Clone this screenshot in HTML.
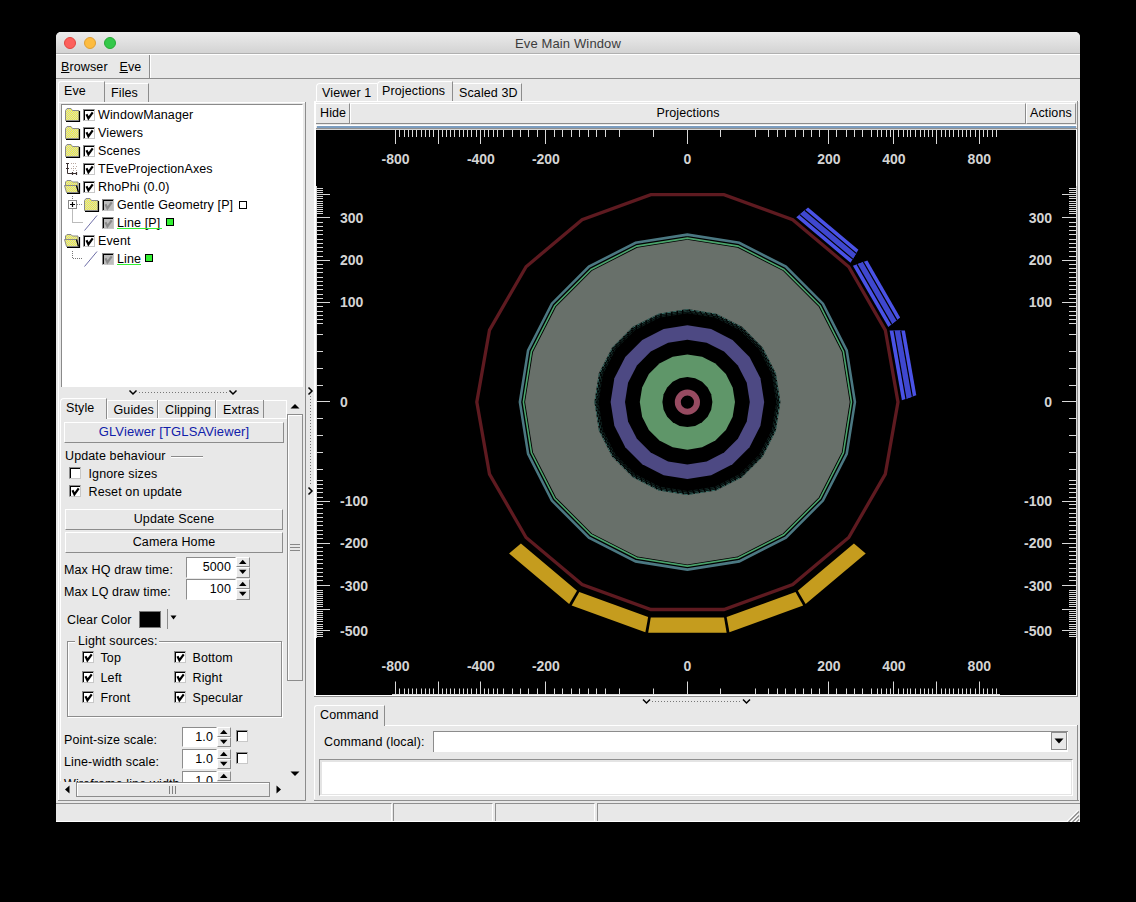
<!DOCTYPE html>
<html><head><meta charset="utf-8">
<style>
html,body{margin:0;padding:0;background:#000;width:1136px;height:902px;overflow:hidden;position:relative;font-family:"Liberation Sans",sans-serif;}
.a{position:absolute;box-sizing:border-box;}
.t{position:absolute;white-space:nowrap;font-size:12.5px;line-height:14px;color:#000;letter-spacing:0.12px;}
.win{position:absolute;left:56px;top:32px;width:1024px;height:790px;background:#e8e8e8;border-radius:5px 5px 0 0;overflow:hidden;}
.raised{border-top:1px solid #fff;border-left:1px solid #fff;border-right:1px solid #8c8c8c;border-bottom:1px solid #8c8c8c;}
.sunken{border-top:1px solid #8c8c8c;border-left:1px solid #8c8c8c;border-right:1px solid #fff;border-bottom:1px solid #fff;}
.cb{position:absolute;width:12px;height:12px;box-sizing:border-box;background:#fff;border-top:1px solid #8a8a8a;border-left:1px solid #8a8a8a;border-right:1px solid #c8c8c8;border-bottom:1px solid #c8c8c8;box-shadow:inset 1px 1px 0 #000;}
.cbg{background:#bdbdbd !important;}
.cb svg{position:absolute;left:0;top:0;}
.cbg{background:#8c8c8c;}
.dot{border-top:1px dotted #888;}
</style></head><body>
<div class="win">
  <!-- title bar -->
  <div class="a" style="left:0;top:0;width:1024px;height:22px;background:linear-gradient(#ececec,#d3d3d3);border-bottom:1px solid #b0b0b0;"></div>
  <div class="a" style="left:8px;top:5px;width:12px;height:12px;border-radius:50%;background:#fc605c;border:0.5px solid #e1463f;"></div>
  <div class="a" style="left:28px;top:5px;width:12px;height:12px;border-radius:50%;background:#fdbc40;border:0.5px solid #de9f34;"></div>
  <div class="a" style="left:48px;top:5px;width:12px;height:12px;border-radius:50%;background:#34c84a;border:0.5px solid #27aa35;"></div>
  <div class="t" style="left:0;width:1024px;text-align:center;top:5px;font-size:13px;letter-spacing:0.13px;color:#3c3c3c;">Eve Main Window</div>
</div>
<!-- All content in page coordinates -->
<!-- menu bar -->
<div class="a" style="left:56px;top:54px;width:1024px;height:1px;background:#fff;"></div>
<div class="a" style="left:56px;top:78px;width:1024px;height:1px;background:#8c8c8c;"></div>
<div class="a" style="left:149px;top:55px;width:1px;height:23px;background:#8c8c8c;"></div>
<div class="a" style="left:150px;top:55px;width:1px;height:23px;background:#fff;"></div>
<div class="t" style="left:61px;top:60px;font-size:12.5px;"><u>B</u>rowser</div>
<div class="t" style="left:119.5px;top:60px;font-size:12.5px;"><u>E</u>ve</div>

<!-- LEFT PANEL -->
<!-- tabs Eve / Files -->
<div class="a" style="left:58px;top:81px;width:47px;height:22px;border-top:1px solid #fff;border-left:1px solid #fff;border-right:1px solid #8c8c8c;border-radius:3px 0 0 0;"></div>
<div class="t" style="left:64px;top:84px;">Eve</div>
<div class="a" style="left:105px;top:83px;width:44px;height:19px;border-top:1px solid #fff;border-right:1px solid #8c8c8c;"></div>
<div class="t" style="left:111px;top:86px;">Files</div>
<div class="a" style="left:58px;top:102px;width:248px;height:1px;background:#fff;"></div>
<div class="a" style="left:58px;top:102px;width:1px;height:698px;background:#fff;"></div>
<div class="a" style="left:305px;top:102px;width:1px;height:698px;background:#8c8c8c;"></div>
<!-- list box -->
<div class="a" style="left:61px;top:104px;width:242px;height:283px;background:#fff;border-top:1px solid #8a8a8a;border-left:1px solid #8a8a8a;border-right:1px solid #fff;"></div>
<svg class="a" style="left:65px;top:108px" width="16" height="14"><path d="M0.5 12.5V2.5L2 0.5H6L7.5 2.5H14V12.5Z" fill="url(#dith)" stroke="#8a8a8a" stroke-width="1"/><path d="M1 13.5H14.5V3" stroke="#000" stroke-width="1.2" fill="none"/></svg>
<div class="cb" style="left:83px;top:109px;"><svg width="12" height="12"><path d="M2.5 4.3L4.4 8.3L8.7 2.3" stroke="#000" stroke-width="2.2" fill="none"/></svg></div>
<div class="t" style="left:98px;top:107.5px;">WindowManager</div>
<svg class="a" style="left:65px;top:126px" width="16" height="14"><path d="M0.5 12.5V2.5L2 0.5H6L7.5 2.5H14V12.5Z" fill="url(#dith)" stroke="#8a8a8a" stroke-width="1"/><path d="M1 13.5H14.5V3" stroke="#000" stroke-width="1.2" fill="none"/></svg>
<div class="cb" style="left:83px;top:127px;"><svg width="12" height="12"><path d="M2.5 4.3L4.4 8.3L8.7 2.3" stroke="#000" stroke-width="2.2" fill="none"/></svg></div>
<div class="t" style="left:98px;top:125.5px;">Viewers</div>
<svg class="a" style="left:65px;top:144px" width="16" height="14"><path d="M0.5 12.5V2.5L2 0.5H6L7.5 2.5H14V12.5Z" fill="url(#dith)" stroke="#8a8a8a" stroke-width="1"/><path d="M1 13.5H14.5V3" stroke="#000" stroke-width="1.2" fill="none"/></svg>
<div class="cb" style="left:83px;top:145px;"><svg width="12" height="12"><path d="M2.5 4.3L4.4 8.3L8.7 2.3" stroke="#000" stroke-width="2.2" fill="none"/></svg></div>
<div class="t" style="left:98px;top:143.5px;">Scenes</div>
<svg class="a" style="left:65px;top:162px" width="13" height="13"><path d="M2.5 1v10.5h9.5" stroke="#3a3030" stroke-width="1" fill="none"/><path d="M1 1.5h3M1 6.5h3M7.5 10v3M11.5 10v3" stroke="#3a3030" stroke-width="1.2"/><path d="M6 1.5h1M8 1.5h1M10 1.5h1M8 4.5h1M11 4.5h1M6 6.5h1M8 6.5h1M10 6.5h1M8 8.5h1M11 8.5h1" stroke="#b8a8a0" stroke-width="1"/></svg>
<div class="cb" style="left:83px;top:163px;"><svg width="12" height="12"><path d="M2.5 4.3L4.4 8.3L8.7 2.3" stroke="#000" stroke-width="2.2" fill="none"/></svg></div>
<div class="t" style="left:98px;top:161.5px;">TEveProjectionAxes</div>
<svg class="a" style="left:64px;top:180px" width="17" height="14"><path d="M1.5 5V2L3 0.5H7L8.5 2H14V12.5H3Z" fill="url(#dith)" stroke="#8a8a8a" stroke-width="1"/><path d="M0.5 5.5H12.5L14.5 12.5H2.5Z" fill="url(#dith)" stroke="#8a8a8a" stroke-width="1"/><path d="M12.5 5.5L14.5 12.5" stroke="#000" stroke-width="1.2"/><path d="M3 13.5H15.5V3" stroke="#000" stroke-width="1.2" fill="none"/></svg>
<div class="cb" style="left:83px;top:181px;"><svg width="12" height="12"><path d="M2.5 4.3L4.4 8.3L8.7 2.3" stroke="#000" stroke-width="2.2" fill="none"/></svg></div>
<div class="t" style="left:98px;top:179.5px;">RhoPhi (0.0)</div>
<svg class="a" style="left:66px;top:196px" width="20" height="36"><path d="M6.5 0V3.5M6.5 12.5V26.5H17" stroke="#777" stroke-width="1" stroke-dasharray="1 1" fill="none"/><rect x="2.5" y="4.5" width="8" height="8" fill="#fff" stroke="#888"/><path d="M4 8.5h5M6.5 6v5" stroke="#000" stroke-width="1.2"/><path d="M11 8.5h6" stroke="#888" stroke-dasharray="1 1"/></svg>
<svg class="a" style="left:84px;top:198px" width="16" height="14"><path d="M0.5 12.5V2.5L2 0.5H6L7.5 2.5H14V12.5Z" fill="url(#dith)" stroke="#8a8a8a" stroke-width="1"/><path d="M1 13.5H14.5V3" stroke="#000" stroke-width="1.2" fill="none"/></svg>
<div class="cb cbg" style="left:102px;top:199px;"><svg width="12" height="12"><path d="M2.5 4.3L4.4 8.3L8.7 2.3" stroke="#8a8a8a" stroke-width="2.2" fill="none"/></svg></div>
<div class="t" style="left:117px;top:197.5px;">Gentle Geometry [P]</div>
<div class="a" style="left:239px;top:201px;width:8px;height:8px;border:1px solid #000;background:#fff;"></div>
<svg class="a" style="left:84px;top:215px" width="14" height="16"><path d="M0.5 15.5L13 0.5" stroke="#5c5c9c" stroke-width="0.9"/></svg>
<div class="cb cbg" style="left:102px;top:217px;"><svg width="12" height="12"><path d="M2.5 4.3L4.4 8.3L8.7 2.3" stroke="#8a8a8a" stroke-width="2.2" fill="none"/></svg></div>
<div class="t" style="left:117px;top:215.5px;">Line [P]</div>
<div class="a" style="left:117px;top:228px;width:45px;height:1px;background:#33f033;"></div>
<div class="a" style="left:166px;top:218px;width:8px;height:8px;border:1px solid #000;background:#33f033;"></div>
<svg class="a" style="left:64px;top:234px" width="17" height="14"><path d="M1.5 5V2L3 0.5H7L8.5 2H14V12.5H3Z" fill="url(#dith)" stroke="#8a8a8a" stroke-width="1"/><path d="M0.5 5.5H12.5L14.5 12.5H2.5Z" fill="url(#dith)" stroke="#8a8a8a" stroke-width="1"/><path d="M12.5 5.5L14.5 12.5" stroke="#000" stroke-width="1.2"/><path d="M3 13.5H15.5V3" stroke="#000" stroke-width="1.2" fill="none"/></svg>
<div class="cb" style="left:83px;top:235px;"><svg width="12" height="12"><path d="M2.5 4.3L4.4 8.3L8.7 2.3" stroke="#000" stroke-width="2.2" fill="none"/></svg></div>
<div class="t" style="left:98px;top:233.5px;">Event</div>
<svg class="a" style="left:66px;top:249px" width="20" height="12"><path d="M6.5 2V9.5H17" stroke="#777" stroke-width="1" stroke-dasharray="1 1" fill="none"/></svg>
<svg class="a" style="left:84px;top:251px" width="14" height="16"><path d="M0.5 15.5L13 0.5" stroke="#5c5c9c" stroke-width="0.9"/></svg>
<div class="cb cbg" style="left:102px;top:253px;"><svg width="12" height="12"><path d="M2.5 4.3L4.4 8.3L8.7 2.3" stroke="#8a8a8a" stroke-width="2.2" fill="none"/></svg></div>
<div class="t" style="left:117px;top:251.5px;">Line</div>
<div class="a" style="left:117px;top:264px;width:24px;height:1px;background:#33f033;"></div>
<div class="a" style="left:145px;top:254px;width:8px;height:8px;border:1px solid #000;background:#33f033;"></div>

<!-- splitter h (left) -->
<svg class="a" style="left:56px;top:385px" width="250" height="14">
 <path d="M73.5 5.5l3.5 3.5 3.5-3.5M173.5 5.5l3.5 3.5 3.5-3.5" stroke="#000" stroke-width="1.5" fill="none"/>
 <path d="M83 7.5H172" stroke="#777" stroke-width="1" stroke-dasharray="1 2" fill="none"/>
</svg>

<!-- Style tabs -->
<div class="a" style="left:60px;top:398px;width:47px;height:21px;border-top:1px solid #fff;border-left:1px solid #fff;border-right:1px solid #8c8c8c;border-radius:4px 0 0 0;"></div>
<div class="t" style="left:66px;top:401px;">Style</div>
<div class="a" style="left:107px;top:400px;width:180px;height:1px;background:#fff;"></div>
<div class="a" style="left:107px;top:400px;width:51px;height:19px;border-right:1px solid #8c8c8c;border-left:1px solid #fff;"></div>
<div class="t" style="left:113.5px;top:403px;">Guides</div>
<div class="a" style="left:158px;top:400px;width:58px;height:19px;border-right:1px solid #8c8c8c;border-left:1px solid #fff;"></div>
<div class="t" style="left:165px;top:403px;">Clipping</div>
<div class="a" style="left:216px;top:400px;width:48px;height:19px;border-right:1px solid #8c8c8c;border-left:1px solid #fff;"></div>
<div class="t" style="left:223px;top:403px;">Extras</div>
<div class="a" style="left:107px;top:418px;width:180px;height:1px;background:#fff;"></div>
<div class="a" style="left:286px;top:400px;width:1px;height:19px;background:#fff;"></div>
<div class="a" style="left:60px;top:419px;width:1px;height:362px;background:#fff;"></div>

<!-- GLViewer button -->
<div class="a raised" style="left:64px;top:422px;width:220px;height:21px;"></div>
<div class="t" style="left:64px;width:220px;text-align:center;top:425px;font-size:13px;color:#1020aa;">GLViewer [TGLSAViewer]</div>

<div class="t" style="left:65px;top:449px;">Update behaviour</div>
<div class="a" style="left:171px;top:456px;width:32px;height:1px;background:#8a8a8a;"></div>
<div class="a" style="left:171px;top:457px;width:32px;height:1px;background:#fff;"></div>
<div class="cb" style="left:69px;top:467px;"></div>
<div class="t" style="left:88.5px;top:467px;">Ignore sizes</div>
<div class="cb" style="left:69px;top:485px;"><svg width="12" height="12"><path d="M2.5 4.3L4.4 8.3L8.7 2.3" stroke="#000" stroke-width="2.2" fill="none"/></svg></div>
<div class="t" style="left:88.5px;top:485px;">Reset on update</div>

<div class="a raised" style="left:65px;top:509px;width:218px;height:21px;"></div>
<div class="t" style="left:65px;width:218px;text-align:center;top:512px;">Update Scene</div>
<div class="a raised" style="left:65px;top:532px;width:218px;height:21px;"></div>
<div class="t" style="left:65px;width:218px;text-align:center;top:535px;">Camera Home</div>

<div class="t" style="left:64px;top:563px;">Max HQ draw time:</div>
<div class="a sunken" style="left:186px;top:557px;width:50px;height:21px;background:#fff;"></div>
<div class="t" style="left:186px;width:45px;text-align:right;top:560px;">5000</div>
<div class="a" style="left:236px;top:557px;width:14px;height:10px;border-top:1px solid #fff;border-left:1px solid #fff;border-right:1px solid #8c8c8c;border-bottom:1px solid #8c8c8c;"></div><div class="a" style="left:236px;top:567px;width:14px;height:11px;border-top:1px solid #fff;border-left:1px solid #fff;border-right:1px solid #8c8c8c;border-bottom:1px solid #8c8c8c;"></div><svg class="a" style="left:236px;top:557px" width="14" height="21"><path d="M3 7h7.5l-3.75-4.2z M3 12.8 h7.5l-3.75 4.2z" fill="#000"/></svg>
<div class="t" style="left:64px;top:585px;">Max LQ draw time:</div>
<div class="a sunken" style="left:186px;top:579px;width:50px;height:21px;background:#fff;"></div>
<div class="t" style="left:186px;width:45px;text-align:right;top:582px;">100</div>
<div class="a" style="left:236px;top:579px;width:14px;height:10px;border-top:1px solid #fff;border-left:1px solid #fff;border-right:1px solid #8c8c8c;border-bottom:1px solid #8c8c8c;"></div><div class="a" style="left:236px;top:589px;width:14px;height:11px;border-top:1px solid #fff;border-left:1px solid #fff;border-right:1px solid #8c8c8c;border-bottom:1px solid #8c8c8c;"></div><svg class="a" style="left:236px;top:579px" width="14" height="21"><path d="M3 7h7.5l-3.75-4.2z M3 12.8 h7.5l-3.75 4.2z" fill="#000"/></svg>

<div class="t" style="left:67px;top:613px;">Clear Color</div>
<div class="a" style="left:139px;top:611px;width:22px;height:17px;background:#000;border:1px solid #777;"></div>
<div class="a" style="left:167px;top:609px;width:1px;height:20px;background:#8c8c8c;"></div>
<svg class="a" style="left:170px;top:615px" width="8" height="5"><path d="M0.5 0.5h6l-3 4z" fill="#000"/></svg>

<!-- light sources group -->
<div class="a" style="left:67px;top:641px;width:215px;height:76px;border:1px solid #8c8c8c;box-shadow:inset 1px 1px 0 #fff, 1px 1px 0 #fff;"></div>
<div class="a" style="left:75px;top:634px;width:84px;height:12px;background:#e8e8e8;"></div>
<div class="t" style="left:78px;top:634px;">Light sources:</div>
<div class="cb" style="left:82px;top:651px;"><svg width="12" height="12"><path d="M2.5 4.3L4.4 8.3L8.7 2.3" stroke="#000" stroke-width="2.2" fill="none"/></svg></div>
<div class="t" style="left:100.5px;top:651px;">Top</div>
<div class="cb" style="left:174px;top:651px;"><svg width="12" height="12"><path d="M2.5 4.3L4.4 8.3L8.7 2.3" stroke="#000" stroke-width="2.2" fill="none"/></svg></div>
<div class="t" style="left:192.5px;top:651px;">Bottom</div>
<div class="cb" style="left:82px;top:671px;"><svg width="12" height="12"><path d="M2.5 4.3L4.4 8.3L8.7 2.3" stroke="#000" stroke-width="2.2" fill="none"/></svg></div>
<div class="t" style="left:100.5px;top:671px;">Left</div>
<div class="cb" style="left:174px;top:671px;"><svg width="12" height="12"><path d="M2.5 4.3L4.4 8.3L8.7 2.3" stroke="#000" stroke-width="2.2" fill="none"/></svg></div>
<div class="t" style="left:192.5px;top:671px;">Right</div>
<div class="cb" style="left:82px;top:691px;"><svg width="12" height="12"><path d="M2.5 4.3L4.4 8.3L8.7 2.3" stroke="#000" stroke-width="2.2" fill="none"/></svg></div>
<div class="t" style="left:100.5px;top:691px;">Front</div>
<div class="cb" style="left:174px;top:691px;"><svg width="12" height="12"><path d="M2.5 4.3L4.4 8.3L8.7 2.3" stroke="#000" stroke-width="2.2" fill="none"/></svg></div>
<div class="t" style="left:192.5px;top:691px;">Specular</div>

<!-- point/line size -->
<div class="t" style="left:64px;top:733px;">Point-size scale:</div>
<div class="a sunken" style="left:182px;top:727px;width:35px;height:20px;background:#fff;"></div>
<div class="t" style="left:182px;width:31px;text-align:right;top:730px;">1.0</div>
<div class="a" style="left:217px;top:727px;width:14px;height:10px;border-top:1px solid #fff;border-left:1px solid #fff;border-right:1px solid #8c8c8c;border-bottom:1px solid #8c8c8c;"></div><div class="a" style="left:217px;top:737px;width:14px;height:10px;border-top:1px solid #fff;border-left:1px solid #fff;border-right:1px solid #8c8c8c;border-bottom:1px solid #8c8c8c;"></div><svg class="a" style="left:217px;top:727px" width="14" height="20"><path d="M3 7h7.5l-3.75-4.2z M3 12.8 h7.5l-3.75 4.2z" fill="#000"/></svg>
<div class="cb" style="left:236px;top:730px;"></div>
<div class="t" style="left:64px;top:755px;">Line-width scale:</div>
<div class="a sunken" style="left:182px;top:749px;width:35px;height:20px;background:#fff;"></div>
<div class="t" style="left:182px;width:31px;text-align:right;top:752px;">1.0</div>
<div class="a" style="left:217px;top:749px;width:14px;height:10px;border-top:1px solid #fff;border-left:1px solid #fff;border-right:1px solid #8c8c8c;border-bottom:1px solid #8c8c8c;"></div><div class="a" style="left:217px;top:759px;width:14px;height:10px;border-top:1px solid #fff;border-left:1px solid #fff;border-right:1px solid #8c8c8c;border-bottom:1px solid #8c8c8c;"></div><svg class="a" style="left:217px;top:749px" width="14" height="20"><path d="M3 7h7.5l-3.75-4.2z M3 12.8 h7.5l-3.75 4.2z" fill="#000"/></svg>
<div class="cb" style="left:236px;top:752px;"></div>
<div class="a" style="left:61px;top:771px;width:225px;height:11px;overflow:hidden;">
  <div class="t" style="left:3px;top:6px;">Wireframe line width</div>
  <div class="a sunken" style="left:121px;top:0px;width:35px;height:20px;background:#fff;"></div>
  <div class="t" style="left:121px;width:31px;text-align:right;top:3px;">1.0</div>
  <div class="a" style="left:156px;top:0px;width:14px;height:10px;border-top:1px solid #fff;border-left:1px solid #fff;border-right:1px solid #8c8c8c;border-bottom:1px solid #8c8c8c;"></div>
  <svg class="a" style="left:156px;top:0" width="14" height="10"><path d="M3 7h7.5l-3.75-4.2z" fill="#000"/></svg>
</div>

<!-- vertical scrollbar -->
<svg class="a" style="left:288px;top:402px" width="14" height="10"><path d="M2.5 6.5h9l-4.5-4.5z" fill="#000"/></svg>
<div class="a" style="left:287px;top:414px;width:16px;height:267px;border:1px solid #8c8c8c;border-top-color:#8c8c8c;background:#e8e8e8;box-shadow:inset 1px 1px 0 #fff;"></div>
<svg class="a" style="left:289px;top:543px" width="12" height="10"><path d="M1 1.5h10M1 4.5h10M1 7.5h10" stroke="#888" stroke-width="1"/></svg>
<svg class="a" style="left:289px;top:769px" width="12" height="8"><path d="M1.5 2.5h9l-4.5 4.5z" fill="#000"/></svg>

<!-- horizontal scrollbar -->
<svg class="a" style="left:63px;top:784px" width="10" height="12"><path d="M6.5 1.5v8l-4.5-4z" fill="#000"/></svg>
<div class="a" style="left:76px;top:782px;width:194px;height:15px;border:1px solid #8c8c8c;box-shadow:inset 1px 1px 0 #fff;"></div>
<svg class="a" style="left:168px;top:784px" width="12" height="12"><path d="M1.5 2v8M4.5 2v8M7.5 2v8" stroke="#808080" stroke-width="1"/></svg>
<svg class="a" style="left:274px;top:784px" width="10" height="12"><path d="M2.5 1.5v8l4.5-4z" fill="#000"/></svg>

<div class="a" style="left:58px;top:800px;width:248px;height:1px;background:#8f8f8f;"></div>

<!-- vertical splitter -->
<svg class="a" style="left:306px;top:380px" width="10" height="120">
 <path d="M2.5 7.5l3.5 3.5-3.5 3.5M2.5 107.5l3.5 3.5-3.5 3.5" stroke="#000" stroke-width="1.5" fill="none"/>
 <path d="M4.5 16V106" stroke="#777" stroke-width="1" stroke-dasharray="1 2" fill="none"/>
</svg>

<!-- RIGHT: tabs -->
<div class="a" style="left:316px;top:83px;width:61px;height:19px;border-top:1px solid #fff;border-left:1px solid #fff;border-radius:4px 0 0 0;"></div>
<div class="t" style="left:322px;top:86px;">Viewer 1</div>
<div class="a" style="left:377px;top:81px;width:76px;height:21px;border-top:1px solid #fff;border-left:1px solid #fff;border-right:1px solid #8c8c8c;border-radius:4px 0 0 0;"></div>
<div class="t" style="left:382px;top:84px;">Projections</div>
<div class="a" style="left:453px;top:83px;width:69px;height:19px;border-top:1px solid #fff;border-right:1px solid #8c8c8c;"></div>
<div class="t" style="left:459px;top:86px;">Scaled 3D</div>
<div class="a" style="left:314px;top:101px;width:765px;height:1px;background:#fff;"></div>

<!-- header bar -->
<div class="a" style="left:314px;top:101px;width:2px;height:596px;background:#fff;"></div>
<div class="a raised" style="left:316px;top:103px;width:34px;height:21px;border-left:none;"></div>
<div class="t" style="left:320px;top:106px;">Hide</div>
<div class="a raised" style="left:350px;top:103px;width:676px;height:21px;"></div>
<div class="t" style="left:350px;width:676px;text-align:center;top:106px;">Projections</div>
<div class="a raised" style="left:1026px;top:103px;width:50px;height:21px;"></div>
<div class="t" style="left:1030px;top:106px;">Actions</div>
<div class="a" style="left:1077px;top:101px;width:1px;height:596px;background:#8c8c8c;"></div>
<div class="a" style="left:316px;top:125px;width:761px;height:1px;background:#fff;"></div>
<div class="a" style="left:317px;top:126px;width:759px;height:2px;background:#7b9dc0;"></div>
<div class="a" style="left:316px;top:128px;width:761px;height:1px;background:#8f8f8f;"></div>
<div class="a" style="left:316px;top:129px;width:761px;height:1px;background:#d4d4d4;"></div>
<div class="a" style="left:316px;top:695px;width:761px;height:1px;background:#fff;"></div>
<div class="a" style="left:314px;top:696px;width:764px;height:1px;background:#8f8f8f;"></div>
<!-- horizontal splitter (right) -->
<svg class="a" style="left:316px;top:696px" width="762" height="10">
 <path d="M327 3.5l3.5 3.5 3.5-3.5M427 3.5l3.5 3.5 3.5-3.5" stroke="#000" stroke-width="1.5" fill="none"/>
 <path d="M336 5.5H425" stroke="#777" stroke-width="1" stroke-dasharray="1 2" fill="none"/>
</svg>

<!-- command tab -->
<div class="a" style="left:314px;top:705px;width:71px;height:21px;border-top:1px solid #fff;border-left:1px solid #fff;border-right:1px solid #8c8c8c;border-radius:3px 0 0 0;"></div>
<div class="t" style="left:320px;top:708px;">Command</div>
<div class="a" style="left:385px;top:725px;width:693px;height:1px;background:#fff;"></div>
<div class="a" style="left:314px;top:726px;width:1px;height:73px;background:#fff;"></div>
<div class="a" style="left:314px;top:800px;width:765px;height:1px;background:#8f8f8f;"></div>
<div class="a" style="left:1077px;top:725px;width:1px;height:76px;background:#8c8c8c;"></div>
<div class="t" style="left:324px;top:735px;">Command (local):</div>
<div class="a" style="left:433px;top:731px;width:635px;height:21px;background:#fff;border-top:1px solid #8c8c8c;border-left:1px solid #8c8c8c;"></div>
<div class="a raised" style="left:1051px;top:732px;width:16px;height:18px;background:#e8e8e8;border-color:#8c8c8c;"></div>
<svg class="a" style="left:1054px;top:738px" width="10" height="6"><path d="M0.5 0.5h9l-4.5 5z" fill="#000"/></svg>
<div class="a" style="left:319px;top:759px;width:754px;height:37px;background:#fff;border-top:1px solid #8f8f8f;border-left:1px solid #8f8f8f;border-right:1px solid #fff;border-bottom:1px solid #fff;box-shadow:inset 2px 2px 0 #e4e4e4, inset -1px -1px 0 #e4e4e4;"></div>

<!-- status bar -->
<div class="a" style="left:56px;top:803px;width:336px;height:19px;border-top:1px solid #8f8f8f;border-right:1px solid #fff;"></div>
<div class="a" style="left:393px;top:803px;width:100px;height:19px;border-top:1px solid #8f8f8f;border-left:1px solid #8f8f8f;border-right:1px solid #fff;"></div>
<div class="a" style="left:495px;top:803px;width:100px;height:19px;border-top:1px solid #8f8f8f;border-left:1px solid #8f8f8f;border-right:1px solid #fff;"></div>
<div class="a" style="left:597px;top:803px;width:483px;height:19px;border-top:1px solid #8f8f8f;border-left:1px solid #8f8f8f;"></div>
<div class="a" style="left:56px;top:821px;width:1024px;height:1px;background:#fff;"></div>
<svg class="a" style="left:1066px;top:809px" width="14" height="13"><path d="M13 1.5L1.5 13M13 5.5L5.5 13M13 9.5L9.5 13" stroke="#fff" stroke-width="1.2" transform="translate(-0.8,0)"/><path d="M13 2.5L2.5 13M13 6.5L6.5 13M13 10.5L10.5 13" stroke="#8a8a8a" stroke-width="1.3"/></svg>

<svg class="a" style="left:0;top:0" width="1136" height="902">
<defs><pattern id="dith" width="2" height="2" patternUnits="userSpaceOnUse"><rect width="2" height="2" fill="#d2d2cc"/><rect width="1" height="1" fill="#f8f830"/><rect x="1" y="1" width="1" height="1" fill="#f8f830"/></pattern></defs>
<rect x="316" y="130" width="760" height="565" fill="#000"/>
<rect x="1076" y="129" width="1" height="567" fill="#fff"/>
<polygon points="898.00,402.10 885.30,330.07 848.73,266.73 792.70,219.72 723.97,194.70 650.83,194.70 582.10,219.72 526.07,266.73 489.50,330.07 476.80,402.10 489.50,474.13 526.07,537.47 582.10,584.48 650.83,609.50 723.97,609.50 792.70,584.48 848.73,537.47 885.30,474.13" fill="none" stroke="#5e1a20" stroke-width="3.3"/>
<polygon points="687.40,234.60 635.64,242.80 588.95,266.59 551.89,303.65 528.10,350.34 519.90,402.10 528.10,453.86 551.89,500.55 588.95,537.61 635.64,561.40 687.40,569.60 739.16,561.40 785.85,537.61 822.91,500.55 846.70,453.86 854.90,402.10 846.70,350.34 822.91,303.65 785.85,266.59 739.16,242.80" fill="none" stroke="#4b7882" stroke-width="2.6"/>
<polygon points="687.40,238.10 636.72,246.13 591.00,269.42 554.72,305.70 531.43,351.42 523.40,402.10 531.43,452.78 554.72,498.50 591.00,534.78 636.72,558.07 687.40,566.10 738.08,558.07 783.80,534.78 820.08,498.50 843.37,452.78 851.40,402.10 843.37,351.42 820.08,305.70 783.80,269.42 738.08,246.13" fill="none" stroke="#4aa46c" stroke-width="1.6"/>
<polygon points="687.40,239.80 637.25,247.74 592.00,270.80 556.10,306.70 533.04,351.95 525.10,402.10 533.04,452.25 556.10,497.50 592.00,533.40 637.25,556.46 687.40,564.40 737.55,556.46 782.80,533.40 818.70,497.50 841.76,452.25 849.70,402.10 841.76,351.95 818.70,306.70 782.80,270.80 737.55,247.74" fill="#68706a"/>
<polygon points="687.40,309.10 658.66,313.65 632.74,326.86 612.16,347.44 598.95,373.36 594.40,402.10 598.95,430.84 612.16,456.76 632.74,477.34 658.66,490.55 687.40,495.10 716.14,490.55 742.06,477.34 762.64,456.76 775.85,430.84 780.40,402.10 775.85,373.36 762.64,347.44 742.06,326.86 716.14,313.65" fill="#000"/>
<polygon points="687.40,309.60 658.82,314.13 633.03,327.27 612.57,347.73 599.43,373.52 594.90,402.10 599.43,430.68 612.57,456.47 633.03,476.93 658.82,490.07 687.40,494.60 715.98,490.07 741.77,476.93 762.23,456.47 775.37,430.68 779.90,402.10 775.37,373.52 762.23,347.73 741.77,327.27 715.98,314.13" fill="none" stroke="#3f7c74" stroke-width="0.9" stroke-dasharray="4 1.5"/>
<polygon points="687.40,311.20 659.31,315.65 633.97,328.56 613.86,348.67 600.95,374.01 596.50,402.10 600.95,430.19 613.86,455.53 633.97,475.64 659.31,488.55 687.40,493.00 715.49,488.55 740.83,475.64 760.94,455.53 773.85,430.19 778.30,402.10 773.85,374.01 760.94,348.67 740.83,328.56 715.49,315.65" fill="none" stroke="#2b5c56" stroke-width="0.6" stroke-dasharray="4 1.5"/>
<polygon points="687.40,312.70 659.77,317.08 634.85,329.77 615.07,349.55 602.38,374.47 598.00,402.10 602.38,429.73 615.07,454.65 634.85,474.43 659.77,487.12 687.40,491.50 715.03,487.12 739.95,474.43 759.73,454.65 772.42,429.73 776.80,402.10 772.42,374.47 759.73,349.55 739.95,329.77 715.03,317.08" fill="none" stroke="#1c3f3b" stroke-width="0.5" stroke-dasharray="4 1.5"/>
<polygon points="687.40,325.30 663.67,329.06 642.26,339.97 625.27,356.96 614.36,378.37 610.60,402.10 614.36,425.83 625.27,447.24 642.26,464.23 663.67,475.14 687.40,478.90 711.13,475.14 732.54,464.23 749.53,447.24 760.44,425.83 764.20,402.10 760.44,378.37 749.53,356.96 732.54,339.97 711.13,329.06" fill="#4d4983"/>
<polygon points="687.40,339.70 668.12,342.75 650.72,351.62 636.92,365.42 628.05,382.82 625.00,402.10 628.05,421.38 636.92,438.78 650.72,452.58 668.12,461.45 687.40,464.50 706.68,461.45 724.08,452.58 737.88,438.78 746.75,421.38 749.80,402.10 746.75,382.82 737.88,365.42 724.08,351.62 706.68,342.75" fill="#000"/>
<polygon points="687.40,354.50 672.69,356.83 659.42,363.59 648.89,374.12 642.13,387.39 639.80,402.10 642.13,416.81 648.89,430.08 659.42,440.61 672.69,447.37 687.40,449.70 702.11,447.37 715.38,440.61 725.91,430.08 732.67,416.81 735.00,402.10 732.67,387.39 725.91,374.12 715.38,363.59 702.11,356.83" fill="#5f9669"/>
<polygon points="687.40,377.10 679.67,378.32 672.71,381.87 667.17,387.41 663.62,394.37 662.40,402.10 663.62,409.83 667.17,416.79 672.71,422.33 679.67,425.88 687.40,427.10 695.13,425.88 702.09,422.33 707.63,416.79 711.18,409.83 712.40,402.10 711.18,394.37 707.63,387.41 702.09,381.87 695.13,378.32" fill="#000"/>
<circle cx="687.40" cy="402.10" r="9.6" fill="none" stroke="#974b61" stroke-width="6"/>
<polygon points="520.88,543.57 509.07,553.60 569.16,604.03 577.00,590.66" fill="#c59c1e"/>
<polygon points="579.31,591.99 571.64,605.46 645.36,632.29 648.14,617.04" fill="#c59c1e"/>
<polygon points="650.77,617.51 648.17,632.79 726.63,632.79 724.03,617.51" fill="#c59c1e"/>
<polygon points="726.66,617.04 729.44,632.29 803.16,605.46 795.49,591.99" fill="#c59c1e"/>
<polygon points="797.80,590.66 805.64,604.03 865.73,553.60 853.92,543.57" fill="#c59c1e"/>
<polygon points="796.27,217.28 808.07,207.47 858.38,249.76 850.51,262.79" fill="#4a52e6"/>
<polygon points="799.79,214.60 804.86,210.19 856.26,253.40 852.78,259.15" fill="#3f47cf"/>
<line x1="799.79" y1="214.60" x2="852.78" y2="259.15" stroke="#000" stroke-width="1.2"/>
<line x1="804.86" y1="210.19" x2="856.26" y2="253.40" stroke="#000" stroke-width="1.2"/>
<polygon points="852.91,265.66 867.36,260.48 900.17,317.43 888.32,326.98" fill="#4a52e6"/>
<polygon points="857.14,264.35 863.41,261.94 896.93,320.12 891.70,324.33" fill="#3f47cf"/>
<line x1="857.14" y1="264.35" x2="891.70" y2="324.33" stroke="#000" stroke-width="1.2"/>
<line x1="863.41" y1="261.94" x2="896.93" y2="320.12" stroke="#000" stroke-width="1.2"/>
<polygon points="889.60,330.50 904.94,330.58 916.30,395.31 901.89,400.23" fill="#4a52e6"/>
<polygon points="894.01,330.71 900.73,330.59 912.34,396.72 905.98,398.90" fill="#3f47cf"/>
<line x1="894.01" y1="330.71" x2="905.98" y2="398.90" stroke="#000" stroke-width="1.2"/>
<line x1="900.73" y1="330.59" x2="912.34" y2="396.72" stroke="#000" stroke-width="1.2"/>
<path d="M687.5 130.0v14M545.5 130.0v14M828.5 130.0v14M480.5 130.0v14M893.5 130.0v14M438.5 130.0v14M936.5 130.0v14M395.5 130.0v14M979.5 130.0v14M653.5 130.0v7M720.5 130.0v7M619.5 130.0v7M755.5 130.0v7M605.5 130.0v7M768.5 130.0v7M596.5 130.0v7M777.5 130.0v7M588.5 130.0v7M785.5 130.0v7M579.5 130.0v7M795.5 130.0v7M571.5 130.0v7M803.5 130.0v7M562.5 130.0v7M811.5 130.0v7M554.5 130.0v7M819.5 130.0v7M537.5 130.0v7M836.5 130.0v7M528.5 130.0v7M846.5 130.0v7M520.5 130.0v7M854.5 130.0v7M512.5 130.0v7M862.5 130.0v7M503.5 130.0v7M871.5 130.0v7M497.5 130.0v7M877.5 130.0v7M493.5 130.0v7M881.5 130.0v7M488.5 130.0v7M886.5 130.0v7M484.5 130.0v7M890.5 130.0v7M476.5 130.0v7M898.5 130.0v7M471.5 130.0v7M903.5 130.0v7M467.5 130.0v7M907.5 130.0v7M463.5 130.0v7M910.5 130.0v7M459.5 130.0v7M915.5 130.0v7M454.5 130.0v7M920.5 130.0v7M450.5 130.0v7M924.5 130.0v7M446.5 130.0v7M928.5 130.0v7M442.5 130.0v7M932.5 130.0v7M433.5 130.0v7M941.5 130.0v7M429.5 130.0v7M945.5 130.0v7M425.5 130.0v7M949.5 130.0v7M421.5 130.0v7M953.5 130.0v7M416.5 130.0v7M958.5 130.0v7M412.5 130.0v7M962.5 130.0v7M408.5 130.0v7M966.5 130.0v7M404.5 130.0v7M970.5 130.0v7M399.5 130.0v7M975.5 130.0v7M983.5 130.0v7M987.5 130.0v7M992.5 130.0v7M996.5 130.0v7M687.5 694.5v-13M545.5 694.5v-13M828.5 694.5v-13M480.5 694.5v-13M893.5 694.5v-13M438.5 694.5v-13M936.5 694.5v-13M395.5 694.5v-13M979.5 694.5v-13M653.5 694.5v-6M720.5 694.5v-6M619.5 694.5v-6M755.5 694.5v-6M605.5 694.5v-6M768.5 694.5v-6M596.5 694.5v-6M777.5 694.5v-6M588.5 694.5v-6M785.5 694.5v-6M579.5 694.5v-6M795.5 694.5v-6M571.5 694.5v-6M803.5 694.5v-6M562.5 694.5v-6M811.5 694.5v-6M554.5 694.5v-6M819.5 694.5v-6M537.5 694.5v-6M836.5 694.5v-6M528.5 694.5v-6M846.5 694.5v-6M520.5 694.5v-6M854.5 694.5v-6M512.5 694.5v-6M862.5 694.5v-6M503.5 694.5v-6M871.5 694.5v-6M497.5 694.5v-6M877.5 694.5v-6M493.5 694.5v-6M881.5 694.5v-6M488.5 694.5v-6M886.5 694.5v-6M484.5 694.5v-6M890.5 694.5v-6M476.5 694.5v-6M898.5 694.5v-6M471.5 694.5v-6M903.5 694.5v-6M467.5 694.5v-6M907.5 694.5v-6M463.5 694.5v-6M910.5 694.5v-6M459.5 694.5v-6M915.5 694.5v-6M454.5 694.5v-6M920.5 694.5v-6M450.5 694.5v-6M924.5 694.5v-6M446.5 694.5v-6M928.5 694.5v-6M442.5 694.5v-6M932.5 694.5v-6M433.5 694.5v-6M941.5 694.5v-6M429.5 694.5v-6M945.5 694.5v-6M425.5 694.5v-6M949.5 694.5v-6M421.5 694.5v-6M953.5 694.5v-6M416.5 694.5v-6M958.5 694.5v-6M412.5 694.5v-6M962.5 694.5v-6M408.5 694.5v-6M966.5 694.5v-6M404.5 694.5v-6M970.5 694.5v-6M399.5 694.5v-6M975.5 694.5v-6M983.5 694.5v-6M987.5 694.5v-6M992.5 694.5v-6M996.5 694.5v-6" stroke="#d9d9d9" stroke-width="1" fill="none"/>
<path d="M316.0 401.5h14M316.0 302.5h14M316.0 501.5h14M316.0 260.5h14M316.0 543.5h14M316.0 217.5h14M316.0 585.5h14M316.0 194.5h14M316.0 609.5h14M316.0 385.5h7M316.0 418.5h7M316.0 368.5h7M316.0 435.5h7M316.0 351.5h7M316.0 452.5h7M316.0 334.5h7M316.0 469.5h7M316.0 323.5h7M316.0 480.5h7M316.0 319.5h7M316.0 484.5h7M316.0 315.5h7M316.0 488.5h7M316.0 311.5h7M316.0 492.5h7M316.0 306.5h7M316.0 497.5h7M316.0 298.5h7M316.0 504.5h7M316.0 294.5h7M316.0 508.5h7M316.0 289.5h7M316.0 513.5h7M316.0 285.5h7M316.0 517.5h7M316.0 281.5h7M316.0 521.5h7M316.0 277.5h7M316.0 525.5h7M316.0 272.5h7M316.0 530.5h7M316.0 268.5h7M316.0 534.5h7M316.0 264.5h7M316.0 538.5h7M316.0 256.5h7M316.0 547.5h7M316.0 251.5h7M316.0 551.5h7M316.0 247.5h7M316.0 555.5h7M316.0 243.5h7M316.0 559.5h7M316.0 239.5h7M316.0 563.5h7M316.0 234.5h7M316.0 568.5h7M316.0 230.5h7M316.0 572.5h7M316.0 226.5h7M316.0 576.5h7M316.0 222.5h7M316.0 580.5h7M316.0 213.5h7M316.0 590.5h7M316.0 211.5h7M316.0 592.5h7M316.0 209.5h7M316.0 594.5h7M316.0 207.5h7M316.0 596.5h7M316.0 205.5h7M316.0 598.5h7M316.0 203.5h7M316.0 600.5h7M316.0 201.5h7M316.0 602.5h7M316.0 198.5h7M316.0 604.5h7M316.0 196.5h7M316.0 606.5h7M316.0 192.5h7M316.0 611.5h7M316.0 190.5h7M316.0 613.5h7M316.0 188.5h7M316.0 615.5h7M316.0 630.5h14M316.0 617.5h7M316.0 619.5h7M316.0 621.5h7M316.0 624.5h7M316.0 626.5h7M316.0 628.5h7M316.0 632.5h7M316.0 634.5h7M316.0 636.5h7M1077.0 401.5h-15M1077.0 302.5h-15M1077.0 501.5h-15M1077.0 260.5h-15M1077.0 543.5h-15M1077.0 217.5h-15M1077.0 585.5h-15M1077.0 194.5h-15M1077.0 609.5h-15M1077.0 385.5h-8M1077.0 418.5h-8M1077.0 368.5h-8M1077.0 435.5h-8M1077.0 351.5h-8M1077.0 452.5h-8M1077.0 334.5h-8M1077.0 469.5h-8M1077.0 323.5h-8M1077.0 480.5h-8M1077.0 319.5h-8M1077.0 484.5h-8M1077.0 315.5h-8M1077.0 488.5h-8M1077.0 311.5h-8M1077.0 492.5h-8M1077.0 306.5h-8M1077.0 497.5h-8M1077.0 298.5h-8M1077.0 504.5h-8M1077.0 294.5h-8M1077.0 508.5h-8M1077.0 289.5h-8M1077.0 513.5h-8M1077.0 285.5h-8M1077.0 517.5h-8M1077.0 281.5h-8M1077.0 521.5h-8M1077.0 277.5h-8M1077.0 525.5h-8M1077.0 272.5h-8M1077.0 530.5h-8M1077.0 268.5h-8M1077.0 534.5h-8M1077.0 264.5h-8M1077.0 538.5h-8M1077.0 256.5h-8M1077.0 547.5h-8M1077.0 251.5h-8M1077.0 551.5h-8M1077.0 247.5h-8M1077.0 555.5h-8M1077.0 243.5h-8M1077.0 559.5h-8M1077.0 239.5h-8M1077.0 563.5h-8M1077.0 234.5h-8M1077.0 568.5h-8M1077.0 230.5h-8M1077.0 572.5h-8M1077.0 226.5h-8M1077.0 576.5h-8M1077.0 222.5h-8M1077.0 580.5h-8M1077.0 213.5h-8M1077.0 590.5h-8M1077.0 211.5h-8M1077.0 592.5h-8M1077.0 209.5h-8M1077.0 594.5h-8M1077.0 207.5h-8M1077.0 596.5h-8M1077.0 205.5h-8M1077.0 598.5h-8M1077.0 203.5h-8M1077.0 600.5h-8M1077.0 201.5h-8M1077.0 602.5h-8M1077.0 198.5h-8M1077.0 604.5h-8M1077.0 196.5h-8M1077.0 606.5h-8M1077.0 192.5h-8M1077.0 611.5h-8M1077.0 190.5h-8M1077.0 613.5h-8M1077.0 188.5h-8M1077.0 615.5h-8M1077.0 630.5h-15M1077.0 617.5h-8M1077.0 619.5h-8M1077.0 621.5h-8M1077.0 624.5h-8M1077.0 626.5h-8M1077.0 628.5h-8M1077.0 632.5h-8M1077.0 634.5h-8M1077.0 636.5h-8" stroke="#d9d9d9" stroke-width="1" fill="none"/>
<path d="M392 694.5H1000M316.5 186V638M1076.5 186V638" stroke="#d9d9d9" stroke-width="1"/>
<text x="395.5" y="163.5" text-anchor="middle" font-family="Liberation Sans" font-weight="bold" font-size="14" fill="#d4d4d4">-800</text>
<text x="395.5" y="670.5" text-anchor="middle" font-family="Liberation Sans" font-weight="bold" font-size="14" fill="#d4d4d4">-800</text>
<text x="480.9" y="163.5" text-anchor="middle" font-family="Liberation Sans" font-weight="bold" font-size="14" fill="#d4d4d4">-400</text>
<text x="480.9" y="670.5" text-anchor="middle" font-family="Liberation Sans" font-weight="bold" font-size="14" fill="#d4d4d4">-400</text>
<text x="545.9" y="163.5" text-anchor="middle" font-family="Liberation Sans" font-weight="bold" font-size="14" fill="#d4d4d4">-200</text>
<text x="545.9" y="670.5" text-anchor="middle" font-family="Liberation Sans" font-weight="bold" font-size="14" fill="#d4d4d4">-200</text>
<text x="687.4" y="163.5" text-anchor="middle" font-family="Liberation Sans" font-weight="bold" font-size="14" fill="#d4d4d4">0</text>
<text x="687.4" y="670.5" text-anchor="middle" font-family="Liberation Sans" font-weight="bold" font-size="14" fill="#d4d4d4">0</text>
<text x="828.9" y="163.5" text-anchor="middle" font-family="Liberation Sans" font-weight="bold" font-size="14" fill="#d4d4d4">200</text>
<text x="828.9" y="670.5" text-anchor="middle" font-family="Liberation Sans" font-weight="bold" font-size="14" fill="#d4d4d4">200</text>
<text x="893.9" y="163.5" text-anchor="middle" font-family="Liberation Sans" font-weight="bold" font-size="14" fill="#d4d4d4">400</text>
<text x="893.9" y="670.5" text-anchor="middle" font-family="Liberation Sans" font-weight="bold" font-size="14" fill="#d4d4d4">400</text>
<text x="979.3" y="163.5" text-anchor="middle" font-family="Liberation Sans" font-weight="bold" font-size="14" fill="#d4d4d4">800</text>
<text x="979.3" y="670.5" text-anchor="middle" font-family="Liberation Sans" font-weight="bold" font-size="14" fill="#d4d4d4">800</text>
<text x="340" y="222.6" font-family="Liberation Sans" font-weight="bold" font-size="14" fill="#d4d4d4">300</text>
<text x="1052" y="222.6" text-anchor="end" font-family="Liberation Sans" font-weight="bold" font-size="14" fill="#d4d4d4">300</text>
<text x="340" y="265.1" font-family="Liberation Sans" font-weight="bold" font-size="14" fill="#d4d4d4">200</text>
<text x="1052" y="265.1" text-anchor="end" font-family="Liberation Sans" font-weight="bold" font-size="14" fill="#d4d4d4">200</text>
<text x="340" y="307.1" font-family="Liberation Sans" font-weight="bold" font-size="14" fill="#d4d4d4">100</text>
<text x="1052" y="307.1" text-anchor="end" font-family="Liberation Sans" font-weight="bold" font-size="14" fill="#d4d4d4">100</text>
<text x="340" y="406.6" font-family="Liberation Sans" font-weight="bold" font-size="14" fill="#d4d4d4">0</text>
<text x="1052" y="406.6" text-anchor="end" font-family="Liberation Sans" font-weight="bold" font-size="14" fill="#d4d4d4">0</text>
<text x="340" y="506.1" font-family="Liberation Sans" font-weight="bold" font-size="14" fill="#d4d4d4">-100</text>
<text x="1052" y="506.1" text-anchor="end" font-family="Liberation Sans" font-weight="bold" font-size="14" fill="#d4d4d4">-100</text>
<text x="340" y="548.1" font-family="Liberation Sans" font-weight="bold" font-size="14" fill="#d4d4d4">-200</text>
<text x="1052" y="548.1" text-anchor="end" font-family="Liberation Sans" font-weight="bold" font-size="14" fill="#d4d4d4">-200</text>
<text x="340" y="590.6" font-family="Liberation Sans" font-weight="bold" font-size="14" fill="#d4d4d4">-300</text>
<text x="1052" y="590.6" text-anchor="end" font-family="Liberation Sans" font-weight="bold" font-size="14" fill="#d4d4d4">-300</text>
<text x="340" y="635.6" font-family="Liberation Sans" font-weight="bold" font-size="14" fill="#d4d4d4">-500</text>
<text x="1052" y="635.6" text-anchor="end" font-family="Liberation Sans" font-weight="bold" font-size="14" fill="#d4d4d4">-500</text>
</svg>
</body></html>
